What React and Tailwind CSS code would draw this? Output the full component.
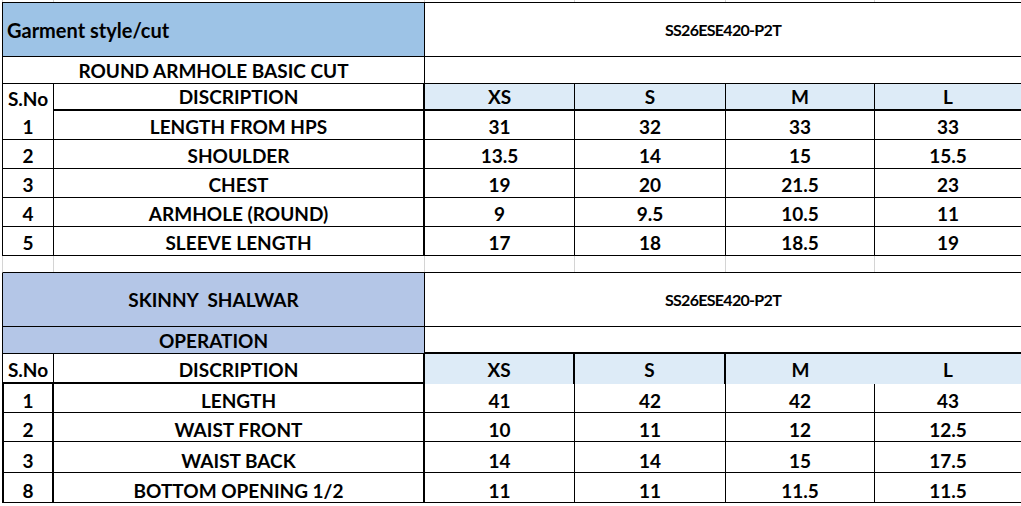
const topRows = [
  ["1", "LENGTH FROM HPS", "31", "32", "33", "33"],
  ["2", "SHOULDER", "13.5", "14", "15", "15.5"],
  ["3", "CHEST", "19", "20", "21.5", "23"],
  ["4", "ARMHOLE (ROUND)", "9", "9.5", "10.5", "11"],
  ["5", "SLEEVE LENGTH", "17", "18", "18.5", "19"],
];

const bottomRows = [
  ["1", "LENGTH", "41", "42", "42", "43", "h-[29px]"],
  ["2", "WAIST FRONT", "10", "11", "12", "12.5", "h-[29px]"],
  ["3", "WAIST BACK", "14", "14", "15", "17.5", "h-[31px]"],
  ["8", "BOTTOM OPENING 1/2", "11", "11", "11.5", "11.5", "h-[30px]"],
];

// excel cells sit on the bottom edge
const cell = "flex items-end justify-center pb-[3px]";
const cellLow = "flex items-end justify-center pb-[2px]";

const App = () => {
  return (
    <div
      className="w-[1021px] h-[506px] overflow-hidden bg-white text-black font-bold text-[19px] leading-none pl-[2px]"
      style={{ fontFamily: "Lato, 'Open Sans', sans-serif" }}
    >
      {/* sliver of the row above */}
      <div className="flex h-[2px] border-l border-[#d4d4d4]">
        <div className="w-[51px] border-r border-[#d4d4d4]"></div>
        <div className="w-[371px] border-r border-[#d4d4d4]"></div>
        <div className="w-[150px] border-r border-[#d4d4d4]"></div>
        <div className="w-[151px] border-r border-[#d4d4d4]"></div>
        <div className="w-[149px] border-r border-[#d4d4d4]"></div>
        <div className="flex-1"></div>
      </div>

      {/* first table */}
      <div className="flex h-[55px] border-t border-b border-l border-black">
        <div className="w-[422px] bg-[#9dc3e6] border-r border-black flex items-center pl-[4px] text-[20px]">
          Garment style/cut
        </div>
        <div className="flex-1 flex items-center justify-center text-[16px] tracking-[-0.7px]">
          SS26ESE420-P2T
        </div>
      </div>
      <div className="flex h-[27px] border-b border-l border-black">
        <div className={`w-[422px] border-r border-black ${cell}`}>
          ROUND ARMHOLE BASIC CUT
        </div>
        <div className="flex-1"></div>
      </div>
      <div className="flex h-[27px] border-l border-black">
        <div className={`w-[51px] border-r border-black ${cell}`}>S.No</div>
        <div className={`w-[371px] border-r-2 border-b-2 border-black ${cell}`}>
          DISCRIPTION
        </div>
        <div className={`w-[150px] bg-[#ddebf7] border-r border-b-2 border-black ${cell}`}>
          XS
        </div>
        <div className={`w-[151px] bg-[#ddebf7] border-r border-b-2 border-black ${cell}`}>
          S
        </div>
        <div className={`w-[149px] bg-[#ddebf7] border-r border-b-2 border-black ${cell}`}>
          M
        </div>
        <div className={`flex-1 bg-[#ddebf7] border-b-2 border-black ${cell}`}>L</div>
      </div>
      {topRows.map((row) => (
        <div key={row[1]} className="flex h-[29px] border-b border-l border-black">
          <div className={`w-[51px] border-r border-black ${cell}`}>{row[0]}</div>
          <div className={`w-[371px] border-r-2 border-black ${cell}`}>{row[1]}</div>
          <div className={`w-[150px] border-r border-black ${cell}`}>{row[2]}</div>
          <div className={`w-[151px] border-r border-black ${cell}`}>{row[3]}</div>
          <div className={`w-[149px] border-r border-black ${cell}`}>{row[4]}</div>
          <div className={`flex-1 ${cell}`}>{row[5]}</div>
        </div>
      ))}

      {/* empty spreadsheet row */}
      <div className="flex h-[17px] border-l border-[#d4d4d4] border-b border-b-black">
        <div className="w-[51px] border-r border-[#d4d4d4]"></div>
        <div className="w-[371px] border-r border-[#d4d4d4]"></div>
        <div className="w-[150px] border-r border-[#d4d4d4]"></div>
        <div className="w-[151px] border-r border-[#d4d4d4]"></div>
        <div className="w-[149px] border-r border-[#d4d4d4]"></div>
        <div className="flex-1"></div>
      </div>

      {/* second table */}
      <div className="flex h-[54px] border-b border-l border-black">
        <div className="w-[422px] bg-[#b4c6e7] border-r border-black flex items-center justify-center whitespace-pre">
          SKINNY  SHALWAR
        </div>
        <div className="flex-1 flex items-center justify-center text-[16px] tracking-[-0.7px]">
          SS26ESE420-P2T
        </div>
      </div>
      <div className="flex h-[27px] border-l border-black">
        <div className={`w-[422px] bg-[#b4c6e7] border-r border-b border-black ${cell}`}>
          OPERATION
        </div>
        <div className="flex-1 border-b-2 border-black"></div>
      </div>
      <div className="flex h-[30px] border-l border-black">
        <div className={`w-[51px] border-r border-b-2 border-black ${cell}`}>S.No</div>
        <div className={`w-[371px] border-r-2 border-b-2 border-black ${cell}`}>
          DISCRIPTION
        </div>
        <div className={`w-[150px] bg-[#ddebf7] border-r-2 border-black ${cell} pb-[5px]`}>
          XS
        </div>
        <div className={`w-[151px] bg-[#ddebf7] border-r-2 border-black ${cell} pb-[5px]`}>
          S
        </div>
        <div className={`w-[149px] bg-[#ddebf7] ${cell} pb-[5px]`}>M</div>
        <div className={`flex-1 bg-[#ddebf7] ${cell} pb-[5px]`}>L</div>
      </div>
      {bottomRows.map((row) => (
        <div key={row[1]} className={`flex ${row[6]} border-b border-l-2 border-black`}>
          <div className={`w-[50px] border-r-2 border-black ${cellLow}`}>{row[0]}</div>
          <div className={`w-[371px] border-r-2 border-black ${cellLow}`}>{row[1]}</div>
          <div className={`w-[150px] border-r border-black ${cellLow}`}>{row[2]}</div>
          <div className={`w-[151px] border-r border-black ${cellLow}`}>{row[3]}</div>
          <div className={`w-[149px] border-r border-black ${cellLow}`}>{row[4]}</div>
          <div className={`flex-1 ${cellLow}`}>{row[5]}</div>
        </div>
      ))}
    </div>
  );
};

export default App;
